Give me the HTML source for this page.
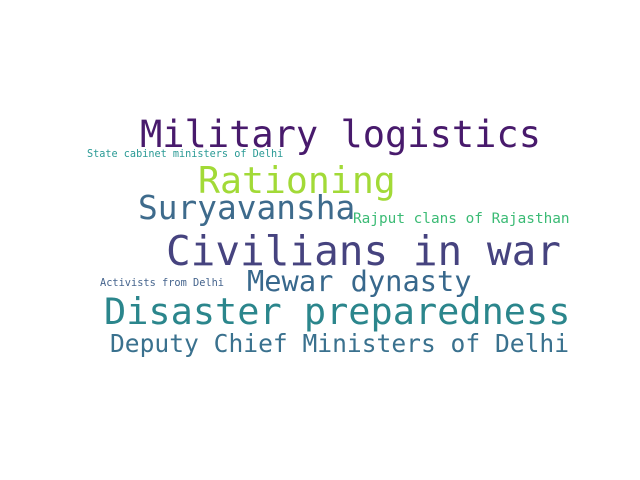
<!DOCTYPE html>
<html><head><meta charset="utf-8"><style>
body{margin:0;width:640px;height:480px;background:#fff;position:relative;overflow:hidden}
div{position:absolute;white-space:nowrap;font-family:"DejaVu Sans Mono","Liberation Mono",monospace;line-height:1}
</style></head><body>
<div style="left:140px;top:116px;font-size:37px;color:#481a6c">Military logistics</div>
<div style="left:87px;top:150px;font-size:10.2px;color:#2a9a95">State cabinet ministers of Delhi</div>
<div style="left:198px;top:163px;font-size:36.5px;color:#a2da37">Rationing</div>
<div style="left:138px;top:192px;font-size:32.8px;color:#3e6b8c">Suryavansha</div>
<div style="left:353px;top:212px;font-size:14.4px;color:#3bbb75">Rajput clans of Rajasthan</div>
<div style="left:166px;top:231px;font-size:41px;color:#46437f">Civilians in war</div>
<div style="left:247px;top:267px;font-size:28.7px;color:#38688c">Mewar dynasty</div>
<div style="left:100px;top:278px;font-size:10.3px;color:#45648d">Activists from Delhi</div>
<div style="left:104px;top:294px;font-size:36.9px;color:#2b868c">Disaster preparedness</div>
<div style="left:110px;top:332px;font-size:24.6px;color:#3a718e">Deputy Chief Ministers of Delhi</div>
</body></html>
